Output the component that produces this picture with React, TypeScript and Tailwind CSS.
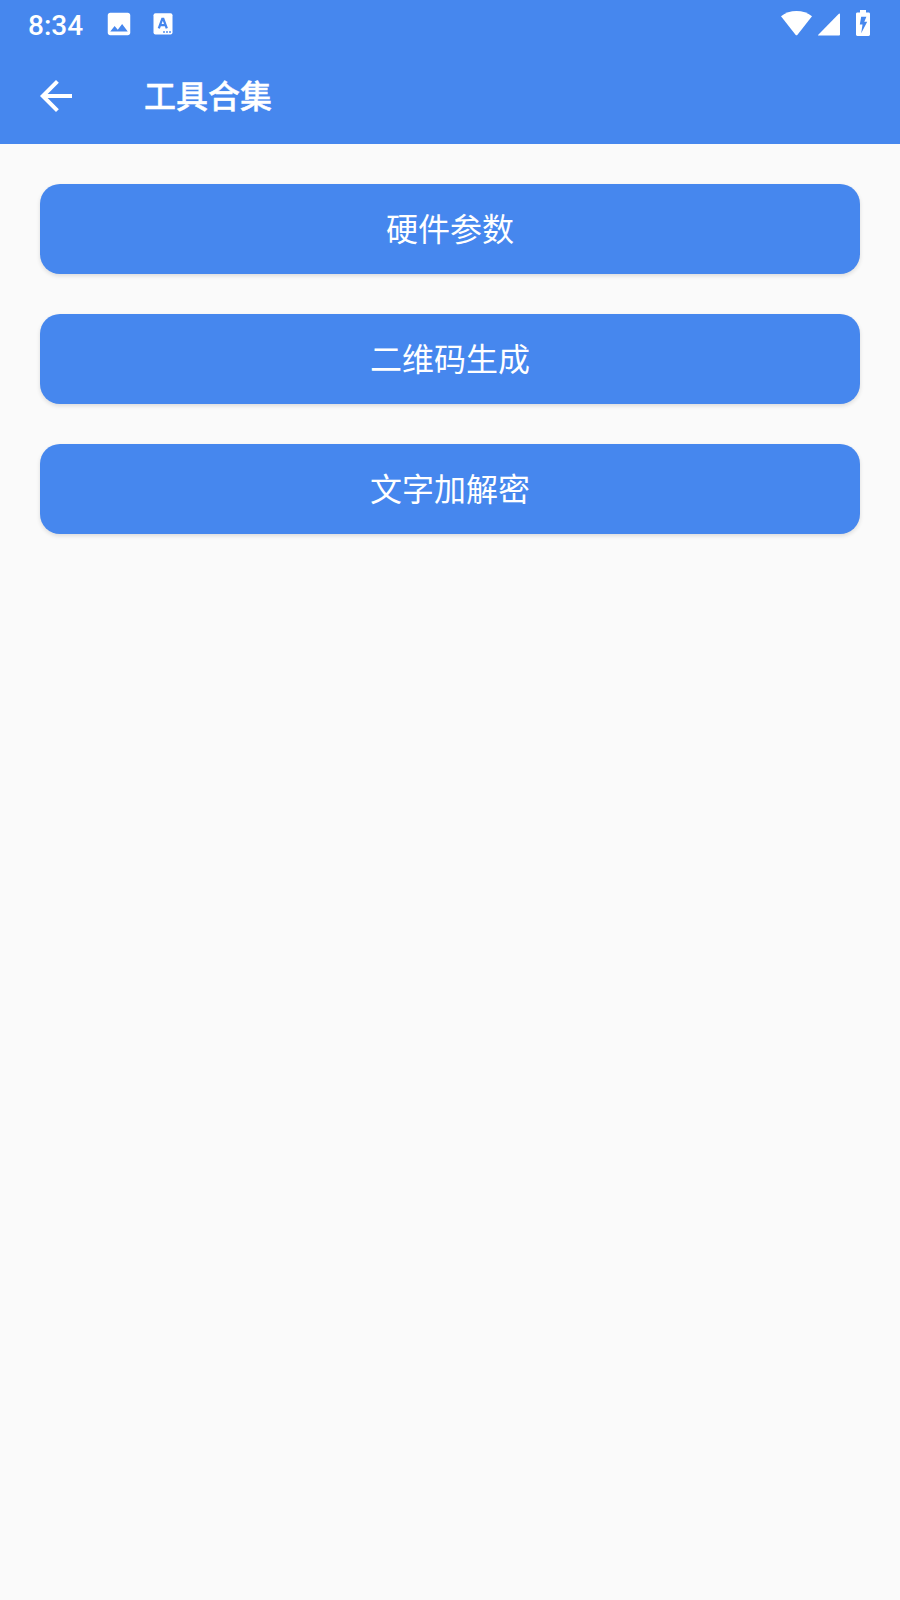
const tools = ['硬件参数', '二维码生成', '文字加解密'];

export default function App() {
  return (
    <div className="min-h-screen bg-[#fafafa] font-[Roboto,'Noto_Sans_CJK_SC',sans-serif]">
      <header className="h-36 bg-[#4687ee] text-white">
        <StatusBar />
        <div className="flex h-24 items-center pl-8">
          <button aria-label="返回">
            <BackIcon />
          </button>
          <h1 className="ml-16 pt-0.5 text-[32px] leading-12 font-medium [-webkit-text-stroke:0.4px_white]">工具合集</h1>
        </div>
      </header>

      <main className="flex flex-col gap-10 p-10">
        {tools.map((name) => (
          <button
            key={name}
            className="h-[90px] rounded-[20px] bg-[#4687ee] pt-0.5 text-[32px] leading-12 text-white shadow-[0_2px_4px_rgba(0,0,0,0.12)]"
          >
            {name}
          </button>
        ))}
      </main>
    </div>
  );
}

function StatusBar() {
  return (
    <div className="flex h-12 items-center justify-between pr-[30px] pl-7">
      <div className="flex items-center">
        <span className="w-[55px] pt-1 text-[28px] leading-8 font-medium">8:34</span>
        <ImageIcon />
        <LetterIcon />
      </div>
      <div className="flex items-center pb-0.5">
        <WifiIcon />
        <SignalIcon />
        <BatteryIcon />
      </div>
    </div>
  );
}

function BackIcon() {
  return (
    <svg width="48" height="48" viewBox="0 0 24 24" fill="currentColor">
      <path d="M20 11H7.83l5.59-5.59L12 4l-8 8 8 8 1.41-1.41L7.83 13H20v-2z" />
    </svg>
  );
}

function ImageIcon() {
  return (
    <svg className="ml-[21px]" width="30" height="30" viewBox="0 0 24 24" fill="currentColor">
      <path d="M21 19V5c0-1.1-.9-2-2-2H5c-1.1 0-2 .9-2 2v14c0 1.1.9 2 2 2h14c1.1 0 2-.9 2-2zM8.5 13.5l2.5 3.01L14.5 12l4.5 6H5l3.5-4.5z" />
    </svg>
  );
}

function LetterIcon() {
  return (
    <svg className="ml-[19px]" width="20" height="22" viewBox="0 0 20 22" fill="none">
      <rect x="0.5" y="0.3" width="19" height="21.2" rx="2" fill="#fff" />
      <path d="M5.8 15.4 9.3 5.8h1l3.5 9.6M7.4 12.2h5" stroke="#4687ee" strokeWidth="2.3" />
      <path d="M10 18h2v2h-2zM13 18h2v2h-2zM16 18h2v2h-2z" fill="#4687ee" fillOpacity="0.7" />
    </svg>
  );
}

function WifiIcon() {
  return (
    <svg width="32" height="26" viewBox="0 0 32 26" fill="currentColor">
      <path d="M15.5 1C9.7 1 4.2 2.9 0 6.2l14.5 18.5q1 1.2 2 0L31 6.2C26.8 2.9 21.3 1 15.5 1z" />
    </svg>
  );
}

function SignalIcon() {
  return (
    <svg className="ml-[5px]" width="23" height="26" viewBox="0 0 23 26" fill="currentColor">
      <path d="M.6 25.6Q-.4 25.6.3 24.7L20.6 4Q22 2.9 22 4.5v20.1q0 1-1 1z" />
    </svg>
  );
}

function BatteryIcon() {
  return (
    <svg className="ml-[15px]" width="14" height="26" viewBox="0 0 14 26" fill="currentColor">
      <path
        fillRule="evenodd"
        d="M4 0h6v2.6h2.6c.8 0 1.4.6 1.4 1.4v20.6c0 .8-.6 1.4-1.4 1.4H1.4C.6 26 0 25.4 0 24.6V4c0-.8.6-1.4 1.4-1.4H4zM5.2 6.8 3.8 14.6h2.7L5.2 23.2l6-11.4H8.3l2.1-5z"
      />
    </svg>
  );
}
